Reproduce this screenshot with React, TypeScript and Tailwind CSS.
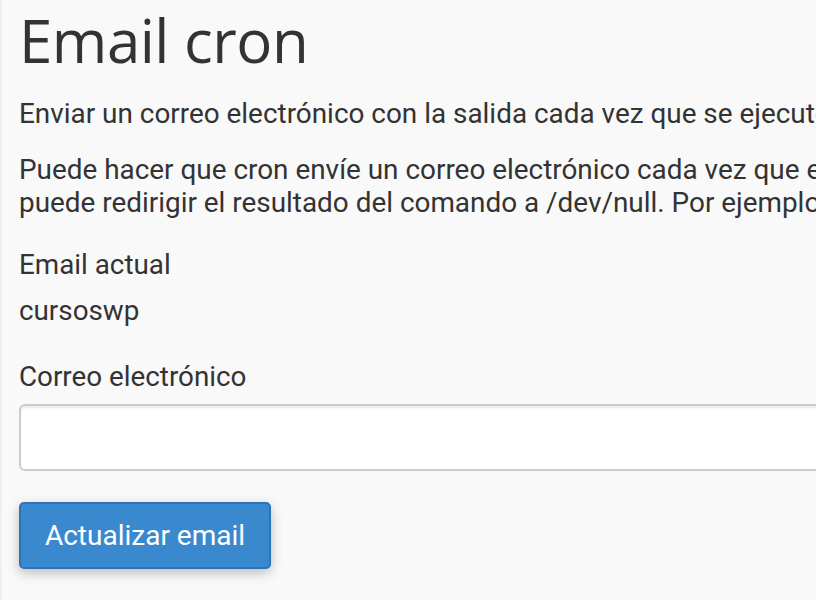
export default function App() {
  return (
    <div className="min-h-[600px] w-[816px] overflow-hidden bg-[#f9f9f9] border-l-[2px] border-[#efefef] text-[#333333] font-['Roboto',sans-serif]">
      <div className="pl-[17px] pt-[7px] w-[1400px]">
        <h1 className="text-[60px] leading-[66px] font-normal font-['Open_Sans',sans-serif] tracking-[-0.5px]">
          Email cron
        </h1>

        <p className="mt-[24px] whitespace-nowrap text-[27.9px] leading-[33px]">
          Enviar un correo electrónico con la salida cada vez que se ejecute un trabajo cron.
        </p>

        <p className="mt-[23px] whitespace-nowrap text-[27.9px] leading-[33px]">
          Puede hacer que cron envíe un correo electrónico cada vez que ejecute un comando que produzca resultados.
          <br />
          puede redirigir el resultado del comando a /dev/null. Por ejemplo: mycommand &gt;/dev/null 2&gt;&amp;1
        </p>

        <div className="mt-[29px] text-[27.8px] leading-[33px]">Email actual</div>
        <div className="mt-[13px] text-[27.8px] leading-[33px]">cursoswp</div>

        <label className="block mt-[33px] text-[27.8px] leading-[33px]">Correo electrónico</label>
        <input
          type="email"
          className="mt-[11px] block h-[67px] w-[1000px] rounded-[6px] border-[2px] border-[#cccccc] bg-white px-4 text-[26px] shadow-[inset_0_2px_2px_rgba(0,0,0,0.075)] outline-none"
        />

        <button className="mt-[31px] flex h-[67px] w-[252px] items-center justify-center rounded-[5px] border-[2px] border-[#2f75b5] bg-[#3a89cf] text-[28px] text-white shadow-[0_4px_12px_rgba(0,0,0,0.25)]">
          Actualizar email
        </button>
      </div>
    </div>
  );
}
